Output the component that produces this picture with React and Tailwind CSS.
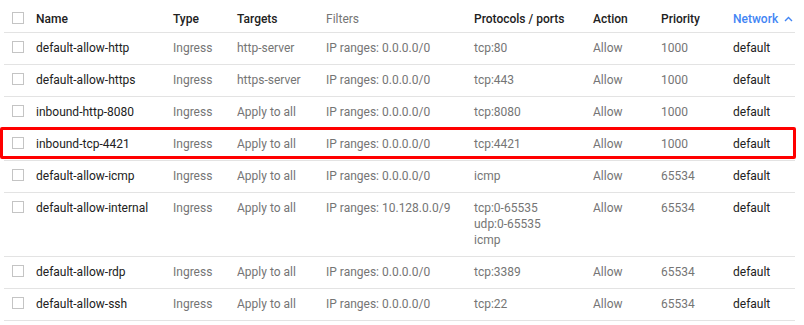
import React from 'react';

const rules = [
  { name: 'default-allow-http', targets: 'http-server', filter: 'IP ranges: 0.0.0.0/0', ports: ['tcp:80'], priority: '1000' },
  { name: 'default-allow-https', targets: 'https-server', filter: 'IP ranges: 0.0.0.0/0', ports: ['tcp:443'], priority: '1000' },
  { name: 'inbound-http-8080', targets: 'Apply to all', filter: 'IP ranges: 0.0.0.0/0', ports: ['tcp:8080'], priority: '1000' },
  { name: 'inbound-tcp-4421', targets: 'Apply to all', filter: 'IP ranges: 0.0.0.0/0', ports: ['tcp:4421'], priority: '1000', marked: true },
  { name: 'default-allow-icmp', targets: 'Apply to all', filter: 'IP ranges: 0.0.0.0/0', ports: ['icmp'], priority: '65534' },
  { name: 'default-allow-internal', targets: 'Apply to all', filter: 'IP ranges: 10.128.0.0/9', ports: ['tcp:0-65535', 'udp:0-65535', 'icmp'], priority: '65534' },
  { name: 'default-allow-rdp', targets: 'Apply to all', filter: 'IP ranges: 0.0.0.0/0', ports: ['tcp:3389'], priority: '65534' },
  { name: 'default-allow-ssh', targets: 'Apply to all', filter: 'IP ranges: 0.0.0.0/0', ports: ['tcp:22'], priority: '65534' },
];

const cols = 'grid grid-cols-[32px_137px_64px_89px_148px_119px_68px_72px_62px]';

const Checkbox = () => (
  <div className="ml-2 mt-[1px] w-3 h-3 border border-[#c4c4c4] bg-white"></div>
);

const Row = ({ rule }) => (
  <div className={`${cols} relative border-b border-[#e3e3e3] pt-[7px] pb-2 leading-4 text-[12px] text-[#757575]`}>
    <Checkbox />
    <div className="text-[#212121]">{rule.name}</div>
    <div>Ingress</div>
    <div>{rule.targets}</div>
    <div>{rule.filter}</div>
    <div className="flex flex-col">
      {rule.ports.map((p) => (
        <span key={p}>{p}</span>
      ))}
    </div>
    <div>Allow</div>
    <div>{rule.priority}</div>
    <div className="text-[#212121]">default</div>
    {rule.marked && (
      <div className="absolute top-[-2px] left-[-4px] right-[-1px] h-[32px] border-[3px] border-[#ff0000] rounded-[2px]"></div>
    )}
  </div>
);

const App = () => {
  return (
    <div className="w-[804px] h-[325px] bg-white overflow-hidden font-['Roboto',sans-serif]">
      <div className="ml-1 w-[791px]">
        <div className={`${cols} border-b border-[#e3e3e3] pt-[11px] pb-[5px] leading-4 text-[12px] font-medium text-[#212121]`}>
          <Checkbox />
          <div>Name</div>
          <div>Type</div>
          <div>Targets</div>
          <div className="font-normal text-[#757575]">Filters</div>
          <div>Protocols / ports</div>
          <div>Action</div>
          <div>Priority</div>
          <div className="flex items-center gap-[6px] text-[#4285f4]">
            Network
            <svg width="9" height="6" viewBox="0 0 9 6" fill="none">
              <path d="M1 5 L4.5 1.5 L8 5" stroke="#4285f4" strokeWidth="1.4" />
            </svg>
          </div>
        </div>
        {rules.map((r) => (
          <Row key={r.name} rule={r} />
        ))}
      </div>
    </div>
  );
};

export default App;
